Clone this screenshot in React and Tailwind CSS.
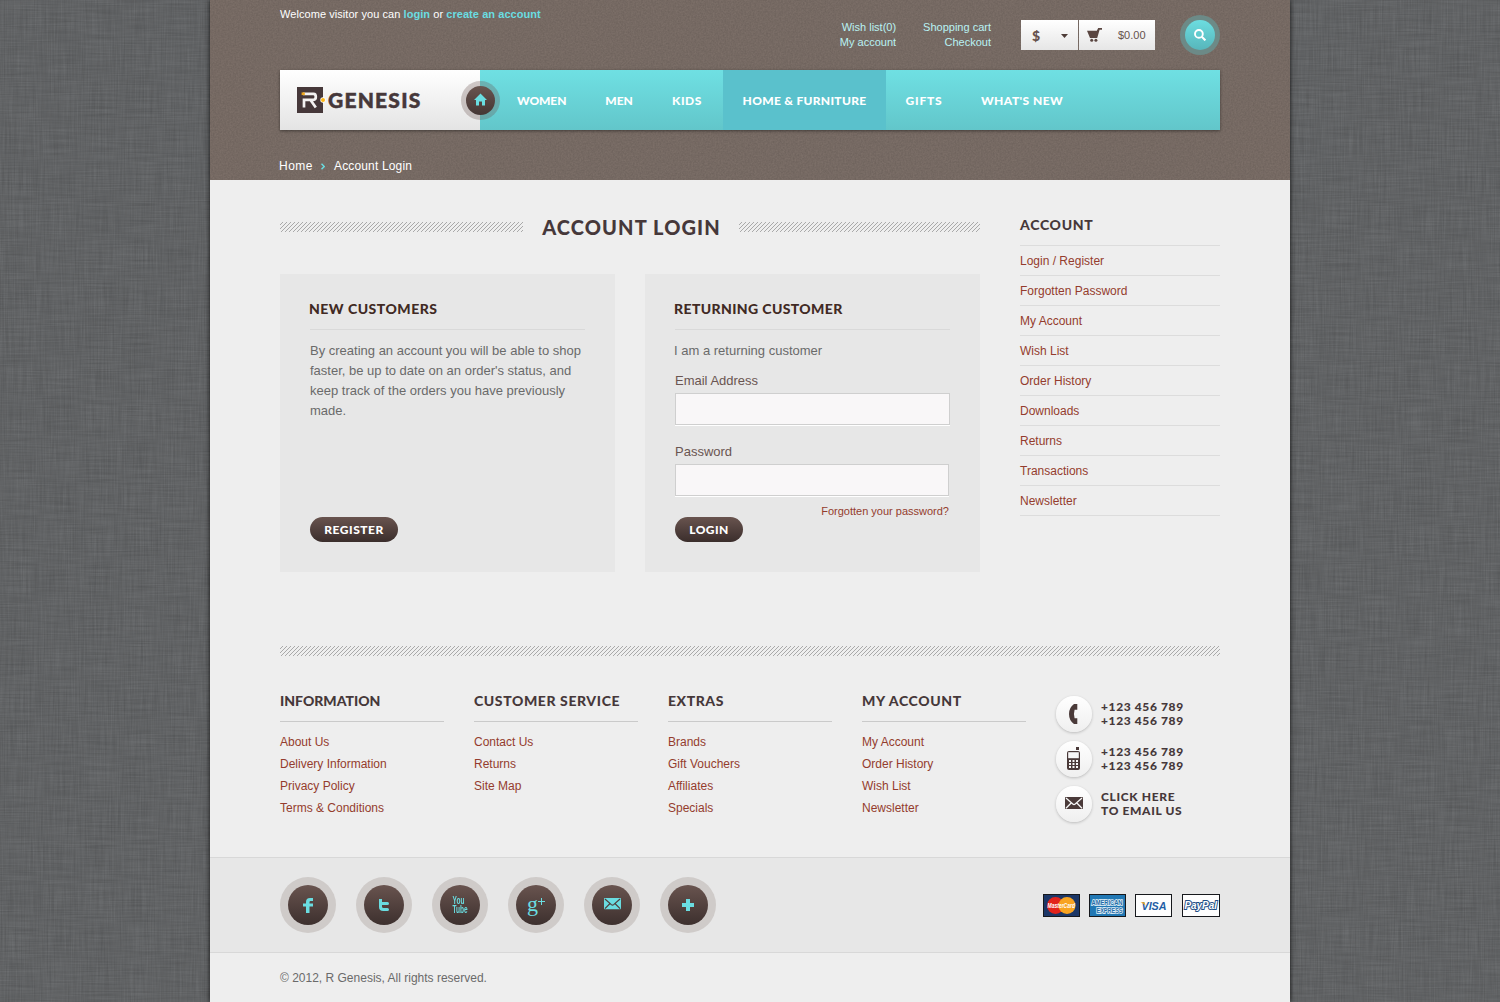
import React from "react";

const NAV = [
  ["WOMEN", "ml-[37px] tracking-[-0.1px]"],
  ["MEN", "ml-[39px] tracking-[-0.1px]"],
  ["KIDS", "ml-[39.5px] tracking-[0.5px]"],
];
const NAV_AFTER = [
  ["GIFTS", "ml-[19.5px] tracking-[0.8px]"],
  ["WHAT'S NEW", "ml-[38.5px] tracking-[0.45px]"],
];
const ACCOUNT_LINKS = [
  "Login / Register",
  "Forgotten Password",
  "My Account",
  "Wish List",
  "Order History",
  "Downloads",
  "Returns",
  "Transactions",
  "Newsletter",
];
const FOOTER = [
  ["INFORMATION", "tracking-[0px]", ["About Us", "Delivery Information", "Privacy Policy", "Terms & Conditions"]],
  ["CUSTOMER SERVICE", "tracking-[0.6px]", ["Contact Us", "Returns", "Site Map"]],
  ["EXTRAS", "tracking-[0.55px]", ["Brands", "Gift Vouchers", "Affiliates", "Specials"]],
  ["MY ACCOUNT", "tracking-[0.65px]", ["My Account", "Order History", "Wish List", "Newsletter"]],
];

function Noise({ id, freq, alpha }) {
  return (
    <svg className="absolute inset-0 h-full w-full" aria-hidden="true">
      <filter id={id} x="0" y="0" width="100%" height="100%">
        <feTurbulence type="fractalNoise" baseFrequency={freq} numOctaves="2" seed="4" />
        <feColorMatrix values={`0 0 0 0 0  0 0 0 0 0  0 0 0 0 0  ${alpha} 0 0 0 ${-alpha * 0.2}`} />
      </filter>
      <rect width="100%" height="100%" filter={`url(#${id})`} />
    </svg>
  );
}

function Hatch({ id, className }) {
  return (
    <svg className={`h-[10px] ${className}`} shapeRendering="crispEdges" aria-hidden="true">
      <pattern id={id} width="4" height="4" patternUnits="userSpaceOnUse">
        <path d="M2 0h1v1h-1zM1 1h1v1h-1zM0 2h1v1h-1zM3 3h1v1h-1z" fill="#a9a9a9" />
      </pattern>
      <rect width="100%" height="100%" fill={`url(#${id})`} />
    </svg>
  );
}

function Envelope({ color, line, w = 18 }) {
  return (
    <svg width={w} height={(w * 12) / 18} viewBox="0 0 18 12" className="-mt-[2px]">
      <rect width="18" height="12" rx="0.8" fill={color} />
      <path d="M1 1l6.8 6q1.2 1 2.4 0L17 1M1 11.2l5.4-5.4M17 11.2l-5.4-5.4" fill="none" stroke={line} strokeWidth="1.3" />
    </svg>
  );
}

function SocialCircle({ children }) {
  return (
    <a className="flex h-14 w-14 items-center justify-center rounded-full bg-[#cfcbc9]">
      <span className="flex h-10 w-10 items-center justify-center rounded-full bg-gradient-to-b from-[#69544f] to-[#3d302e] text-[#6adde1]">
        {children}
      </span>
    </a>
  );
}

function ContactRow({ icon, a, b, tracking }) {
  return (
    <div className="flex h-[36px] items-center">
      <span className="flex h-9 w-9 shrink-0 items-center justify-center rounded-full bg-gradient-to-b from-white to-[#efefef] shadow-[0_1px_3px_rgba(0,0,0,0.22)]">
        {icon}
      </span>
      <span className={`ml-[9px] whitespace-nowrap font-['Lato',sans-serif] text-[12px] font-black leading-[14px] text-[#46383a] ${tracking}`}>
        {a}
        <br />
        {b}
      </span>
    </div>
  );
}

function DarkButton({ children, className }) {
  return (
    <button className={`flex h-[25px] items-center justify-center rounded-full bg-gradient-to-b from-[#69544f] to-[#3b2e2c] font-['Lato',sans-serif] text-[12px] font-black text-white ${className}`}>
      {children}
    </button>
  );
}

function CardTitle({ children, className }) {
  return (
    <h2 className={`flex h-[56px] items-center border-b border-[#d9d9d9] pt-[15px] font-['Lato',sans-serif] text-[14px] font-black text-[#412a24] ${className}`}>
      <span className="-ml-px">{children}</span>
    </h2>
  );
}

export default function App() {
  return (
    <div className="relative h-[1002px] overflow-hidden bg-[#6c6e70] font-['Liberation_Sans',Arial,sans-serif] text-[12px] text-[#6a6a6a]">
      <Noise id="weave-h" freq="0.025 0.7" alpha={0.18} />
      <Noise id="weave-v" freq="0.7 0.025" alpha={0.18} />

      <div className="relative mx-auto flex h-full w-[1080px] flex-col bg-[#eeeeee] shadow-[0_0_5px_rgba(0,0,0,0.85)]">
        <header className="relative h-[180px] shrink-0 bg-[#7c6f68]">
          <Noise id="grain" freq="0.6" alpha={0.17} />
          <div className="relative mx-[70px]">
            <div className="flex h-[70px] items-start text-[11px]">
              <p className="mt-[6px] leading-4 tracking-[0.06px] text-white">
                Welcome visitor you can <a className="font-bold text-[#6adde1]">login</a> or{" "}
                <a className="font-bold text-[#6adde1]">create an account</a>
              </p>
              <div className="ml-auto flex text-right leading-[15px] text-[#b9f2f3]">
                <div className="mt-[20px]">
                  Wish list(0)
                  <br />
                  My account
                </div>
                <div className="ml-[27px] mt-[20px]">
                  Shopping cart
                  <br />
                  Checkout
                </div>
              </div>
              <div className="ml-[30px] mt-[20px] flex h-[30px] w-[134px] gap-px text-[#66514c]">
                <div className="flex w-[57px] items-center justify-between bg-gradient-to-b from-white to-[#e6e6e6] pl-[11px] pr-[10px]">
                  <span className="font-['Lato',sans-serif] text-[14px] font-black">$</span>
                  <svg width="7" height="4" viewBox="0 0 7 4" className="mt-[2px]"><path d="M0 0h7L3.5 4z" fill="#4d3c38" /></svg>
                </div>
                <div className="flex flex-1 items-center bg-gradient-to-b from-white to-[#e6e6e6] pl-[8px]">
                  <svg width="15" height="14" viewBox="0 0 15 14">
                    <path d="M0 2.800h9.800L11.200 0H15v1.800h-2.400L10.200 10H3z" fill="#5a4641" />
                    <circle cx="4.700" cy="12.300" r="1.500" fill="#5a4641" />
                    <circle cx="8.900" cy="12.300" r="1.500" fill="#5a4641" />
                  </svg>
                  <span className="ml-[16px]">$0.00</span>
                </div>
              </div>
              <button className="ml-[25px] mt-[15px] flex h-10 w-10 items-center justify-center rounded-full bg-[#6c8a87]">
                <span className="flex h-[30px] w-[30px] items-center justify-center rounded-full bg-gradient-to-b from-[#6cdde0] to-[#57b6bb]">
                  <svg width="12" height="12" viewBox="0 0 12 12" fill="none" stroke="#fff">
                    <circle cx="4.900" cy="4.900" r="3.900" strokeWidth="1.900" />
                    <path d="M7.800 7.800l3.600 3.600" strokeWidth="2.100" />
                  </svg>
                </span>
              </button>
            </div>

            <nav className="relative flex h-[60px] font-['Lato',sans-serif] text-[12px] font-black text-white shadow-[0_1px_3px_rgba(0,0,0,0.45)]">
              <div className="flex w-[200px] items-center bg-gradient-to-b from-white to-[#e4e4e4] pl-[17px]">
                <svg width="31" height="26" viewBox="0 0 31 26">
                  <rect width="26" height="26" fill="#46383a" />
                  <path d="M7 20.500V12.800H16.500Q18.800 12.800 18.800 9.800T16.500 6.800H6M13.500 13L18.800 20.500" fill="none" stroke="#f4f2f2" strokeWidth="2.700" />
                  <path d="M4.600 5.400h3.200v2.700h-3.200z" fill="#f0a81e" />
                  <circle cx="26" cy="13" r="2.700" fill="#fff" />
                  <circle cx="26" cy="13" r="2" fill="#fdb716" />
                </svg>
                <span className="-mt-[2px] text-[21px] leading-none tracking-[1.2px] text-[#46383a] [-webkit-text-stroke:0.5px_#46383a]">GENESIS</span>
              </div>
              <div className="flex flex-1 items-center bg-gradient-to-b from-[#6fe0e3] to-[#62c6ca]">
                {NAV.map(([t, c]) => (
                  <a key={t} className={`pt-[2px] ${c}`}>{t}</a>
                ))}
                <a className="ml-auto flex h-full w-[163px] items-center justify-center bg-[#5ac1cc] pt-[2px] tracking-[0.3px]">HOME &amp; FURNITURE</a>
                <div className="flex w-[334px] items-center">
                  {NAV_AFTER.map(([t, c]) => (
                    <a key={t} className={`pt-[2px] ${c}`}>{t}</a>
                  ))}
                </div>
              </div>
              <span className="absolute left-[180.5px] top-[10.5px] flex h-[39px] w-[39px] items-center justify-center rounded-full bg-[#69544f]/30">
                <span className="flex h-[29px] w-[29px] items-center justify-center rounded-full bg-gradient-to-b from-[#69544f] to-[#453634]">
                  <svg width="13" height="13" viewBox="0 0 13 12" className="-mt-[2px]"><path d="M6.500 0L13 6.500H11V12H8V8H5v4H2V6.500H0z" fill="#6adde1" /></svg>
                </span>
              </span>
            </nav>

            <div className="mt-[28px] flex h-4 items-center leading-4 text-white">
              <span className="-ml-px tracking-[0.5px]">Home</span>
              <svg width="4" height="7" viewBox="0 0 4 7" className="ml-[8px]"><path d="M.5 .8L3.200 3.500.5 6.200" fill="none" stroke="#6adde1" strokeWidth="1.500" /></svg>
              <span className="ml-[9px] tracking-[0.15px]">Account Login</span>
            </div>
          </div>
        </header>

        <main className="mx-[70px] flex h-[466px] shrink-0 gap-10">
          <section className="w-[700px]">
            <div className="flex h-[94px] items-center">
              <Hatch id="hatch-left" className="w-[243px]" />
              <h1 className="w-[216px] pl-px text-center font-['Lato',sans-serif] text-[20px] font-black tracking-[1.1px] text-[#46383a]">ACCOUNT LOGIN</h1>
              <Hatch id="hatch-right" className="w-[241px]" />
            </div>
            <div className="flex gap-[30px] text-[13px] leading-5">
              <article className="flex h-[298px] w-[335px] flex-col items-start bg-[#e7e7e7] px-[30px] pb-[30px]">
                <CardTitle className="w-[275px] tracking-[0.5px]">NEW CUSTOMERS</CardTitle>
                <p className="mt-[11px] w-[275px]">
                  By creating an account you will be able to shop faster, be up to date on an order's status, and keep track of the orders you have previously made.
                </p>
                <DarkButton className="mt-auto w-[88px] tracking-[0.5px]">REGISTER</DarkButton>
              </article>
              <article className="h-[298px] w-[335px] bg-[#e7e7e7] px-[30px]">
                <CardTitle className="w-[275px] tracking-[0.38px]">RETURNING CUSTOMER</CardTitle>
                <p className="-ml-px mt-[11px]">I am a returning customer</p>
                <label className="mt-[10px] block text-[#6a5551]">Email Address</label>
                <input className="mt-[2px] block h-8 w-[275px] border border-[#cfcfcf] bg-[#f9f7f8] shadow-[0_1px_0_#fff]" />
                <label className="mt-[17px] block text-[#6a5551]">Password</label>
                <input className="mt-[2px] block h-8 w-[274px] border border-[#cfcfcf] bg-[#f9f7f8] shadow-[0_1px_0_#fff]" />
                <div className="flex w-[274px] items-start justify-between">
                  <DarkButton className="mt-[21px] w-[68px] tracking-[0.4px]">LOGIN</DarkButton>
                  <a className="mt-[5px] text-[11px] text-[#943c2d]">Forgotten your password?</a>
                </div>
              </article>
            </div>
          </section>
          <aside className="w-[200px] text-[#943c2d]">
            <h3 className="flex h-[66px] items-center border-b border-[#dcdcdc] pt-[23px] font-['Lato',sans-serif] text-[14px] font-black tracking-[0.7px] text-[#46383a]">ACCOUNT</h3>
            <ul>
              {ACCOUNT_LINKS.map((t) => (
                <li key={t} className="flex h-[30px] items-center border-b border-[#dcdcdc]">{t}</li>
              ))}
            </ul>
          </aside>
        </main>

        <footer className="flex shrink-0 flex-col">
          <Hatch id="hatch-full" className="mx-[70px] w-[940px]" />
          <div className="mx-[70px] flex h-[201px] gap-[30px]">
            {FOOTER.map(([title, tracking, links]) => (
              <div key={title} className="w-[164px]">
                <h3 className={`flex h-[66px] items-center whitespace-nowrap border-b border-[#cacaca] pt-[23px] font-['Lato',sans-serif] text-[14px] font-black text-[#46383a] ${tracking}`}>{title}</h3>
                <ul className="mt-[9px] leading-[22px] text-[#943c2d]">
                  {links.map((l) => (
                    <li key={l}>{l}</li>
                  ))}
                </ul>
              </div>
            ))}
            <div className="mt-[40px] flex flex-col gap-[9px]">
              <ContactRow
                a="+123 456 789"
                b="+123 456 789"
                tracking="tracking-[0.62px]"
                icon={
                  <svg width="9" height="20" viewBox="0 0 9 20" className="-ml-[2px]">
                    <path d="M8.300 0v5.800H5.600q-1.300 4.200 0 8.400h2.700V20H5Q0 16.500 0 10T5 0z" fill="#4a3a39" />
                  </svg>
                }
              />
              <ContactRow
                a="+123 456 789"
                b="+123 456 789"
                tracking="tracking-[0.62px]"
                icon={
                  <svg width="13" height="23" viewBox="0 0 13 23" className="-ml-px -mt-px">
                    <rect x="9" width="3" height="3" fill="#4a3a39" />
                    <rect x="0" y="4" width="13" height="19" rx="2" fill="#4a3a39" />
                    <rect x="1.200" y="5.200" width="10.600" height="6" fill="#f7f7f7" />
                    <path d="M2 13h2v2H2zM5.500 13h2v2h-2zM9 13h2v2H9zM2 16h2v2H2zM5.500 16h2v2h-2zM9 16h2v2H9zM2 19h2v2H2zM5.500 19h2v2h-2zM9 19h2v2H9z" fill="#f7f7f7" />
                  </svg>
                }
              />
              <ContactRow a="CLICK HERE" b="TO EMAIL US" tracking="tracking-[0.64px]" icon={<Envelope color="#4a3a39" line="#f7f7f7" />} />
            </div>
          </div>

          <div className="flex h-[96px] items-center justify-between border-y border-[#d8d8d8] bg-[#e7e7e7] px-[70px]">
            <div className="flex gap-5">
              <SocialCircle>
                <svg width="10" height="15" viewBox="0 0 10 15" className="mt-px"><path d="M3 15V8.500H0V5.600h3V4Q3 0 7 0h3v3H7.500Q6.500 3 6.500 4.200v1.400H10v2.900H6.500V15z" fill="#6adde1" /></svg>
              </SocialCircle>
              <SocialCircle>
                <svg width="10" height="12" viewBox="0 0 10 12"><path d="M0 0h3v3h5.500Q10 3 10 4.500T8.500 6H3v1.500Q3 9 4.500 9h4Q10 9 10 10.500T8.500 12H4.200Q0 12 0 8z" fill="#6adde1" /></svg>
              </SocialCircle>
              <SocialCircle>
                <span className="-mt-px flex scale-x-[0.62] flex-col text-[10.5px] font-bold leading-[9px]">
                  <span>You</span>
                  <span>Tube</span>
                </span>
              </SocialCircle>
              <SocialCircle>
                <span className="flex items-start font-['Liberation_Serif',serif] text-[22px] leading-[20px]">
                  <span className="-mt-[3px]">g</span>
                  <svg width="7" height="7" viewBox="0 0 7 7" className="mt-px"><path d="M3 0h1v3h3v1H4v3H3V4H0V3h3z" fill="#6adde1" /></svg>
                </span>
              </SocialCircle>
              <SocialCircle>
                <Envelope color="#6adde1" line="#4f3f3c" w={17} />
              </SocialCircle>
              <SocialCircle>
                <svg width="12" height="12" viewBox="0 0 12 12"><path d="M4 0h4v4h4v4H8v4H4V8H0V4h4z" fill="#6adde1" /></svg>
              </SocialCircle>
            </div>
            <div className="flex gap-[9px] font-['Liberation_Sans',sans-serif] font-bold italic">
              <svg width="37" height="23" viewBox="0 0 37 23">
                <rect x=".5" y=".5" width="36" height="22" fill="#1c3767" stroke="#16181c" />
                <circle cx="12.500" cy="11.500" r="8.500" fill="#e2231c" />
                <circle cx="24" cy="11.500" r="8.500" fill="#f8a421" />
                <text x="4.500" y="14.200" fontSize="7" textLength="27.500" lengthAdjust="spacingAndGlyphs" fill="#fff">MasterCard</text>
              </svg>
              <svg width="37" height="23" viewBox="0 0 37 23">
                <rect x=".5" y=".5" width="36" height="22" fill="#2178b4" stroke="#16181c" />
                <g fontSize="6.800" fontStyle="normal" fill="#1f6ca6" stroke="#e3f2fa" strokeWidth="1.600" paintOrder="stroke">
                  <text x="2.500" y="10.500" textLength="31" lengthAdjust="spacingAndGlyphs">AMERICAN</text>
                  <text x="7.500" y="18.500" textLength="26" lengthAdjust="spacingAndGlyphs">EXPRESS</text>
                </g>
              </svg>
              <svg width="37" height="23" viewBox="0 0 37 23">
                <rect x=".5" y=".5" width="36" height="22" fill="#fdfdfd" stroke="#16181c" />
                <text x="6.500" y="16" fontSize="11" textLength="25" lengthAdjust="spacingAndGlyphs" fill="#1f5da5">VISA</text>
                <path d="M5.500 8.300h4l1 3.500q-1.500-2.500-5-3.500z" fill="#f0a81e" />
              </svg>
              <svg width="38" height="23" viewBox="0 0 38 23" className="ml-px">
                <rect x=".5" y=".5" width="37" height="22" fill="#fdfdfd" stroke="#16181c" />
                <text x="2.500" y="14.800" fontSize="10.500" textLength="32.500" lengthAdjust="spacingAndGlyphs" fill="#fff" stroke="#1f4f86" strokeWidth="2" paintOrder="stroke">PayPal</text>
              </svg>
            </div>
          </div>
          <p className="px-[70px] pt-px leading-[49px]">© 2012, R Genesis, All rights reserved.</p>
        </footer>
      </div>
    </div>
  );
}
